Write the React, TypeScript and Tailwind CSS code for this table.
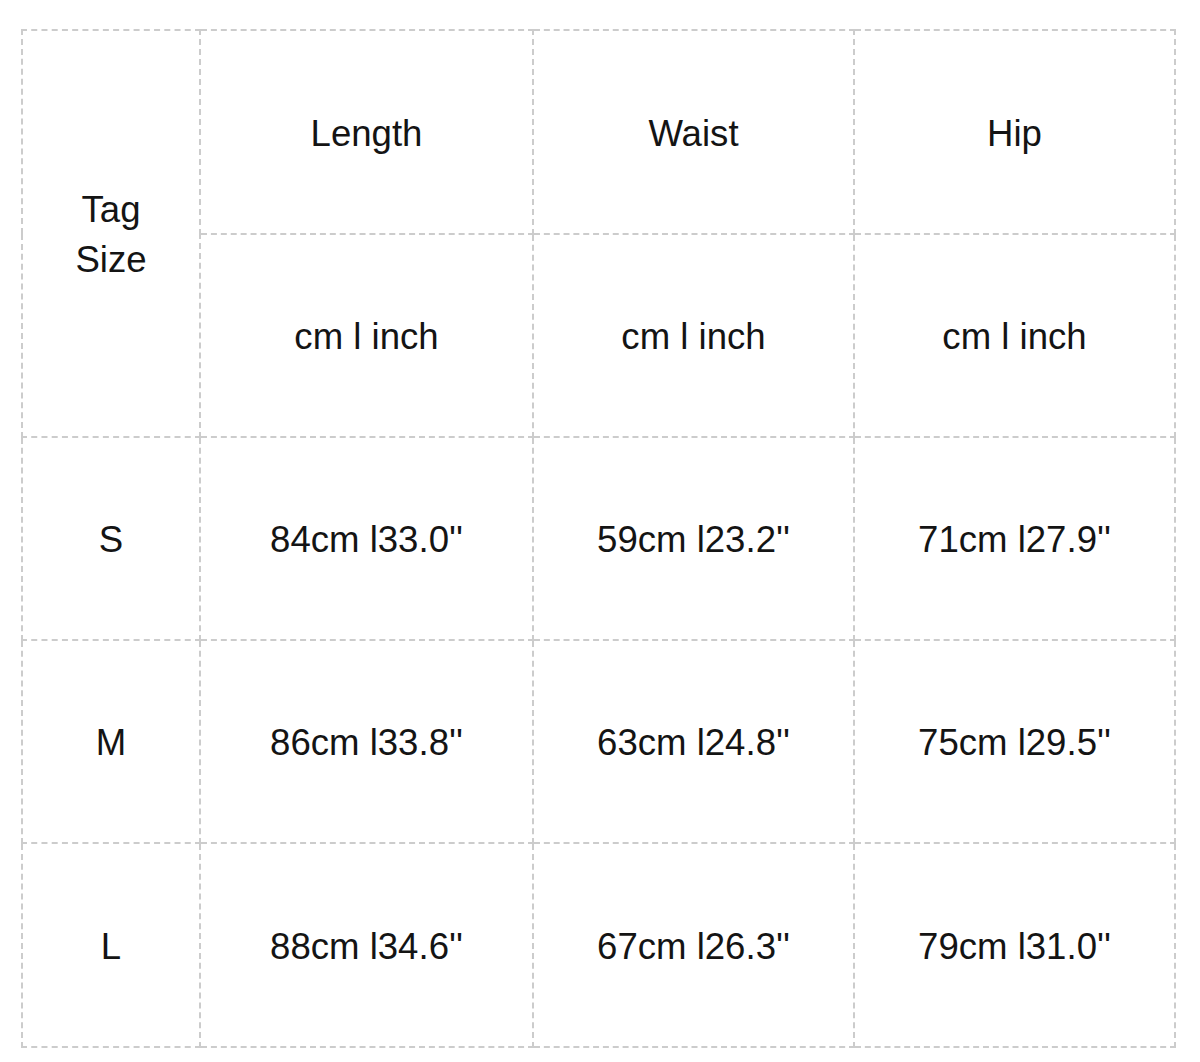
import React from 'react';

const rows = [
  { size: 'S', length: '84cm l33.0\'\'', waist: '59cm l23.2\'\'', hip: '71cm l27.9\'\'' },
  { size: 'M', length: '86cm l33.8\'\'', waist: '63cm l24.8\'\'', hip: '75cm l29.5\'\'' },
  { size: 'L', length: '88cm l34.6\'\'', waist: '67cm l26.3\'\'', hip: '79cm l31.0\'\'' },
];

const cell = 'border-2 border-dashed border-[#cccccc] text-center align-middle p-0 pt-[3px]';

const App: React.FC = () => {
  return (
    <div className="min-h-screen bg-white pl-[21px] pt-[29px] text-[#141414] text-[36.6px] leading-[50px] font-['Liberation_Sans',Arial,sans-serif]">
      <table className="table-fixed border-collapse w-[1155px]">
        <colgroup>
          <col className="w-[178px]" />
          <col className="w-[333px]" />
          <col className="w-[321px]" />
          <col className="w-[321px]" />
        </colgroup>
        <tbody>
          <tr className="h-[204px]">
            <td rowSpan={2} className={cell}>
              Tag
              <br />
              Size
            </td>
            <td className={cell}>Length</td>
            <td className={cell}>Waist</td>
            <td className={cell}>Hip</td>
          </tr>
          <tr className="h-[203px]">
            <td className={cell}>cm l inch</td>
            <td className={cell}>cm l inch</td>
            <td className={cell}>cm l inch</td>
          </tr>
          {rows.map((r, i) => (
            <tr key={r.size} className={i === 2 ? 'h-[204px]' : 'h-[203px]'}>
              <td className={cell}>{r.size}</td>
              <td className={cell}>{r.length}</td>
              <td className={cell}>{r.waist}</td>
              <td className={cell}>{r.hip}</td>
            </tr>
          ))}
        </tbody>
      </table>
    </div>
  );
};

export default App;
